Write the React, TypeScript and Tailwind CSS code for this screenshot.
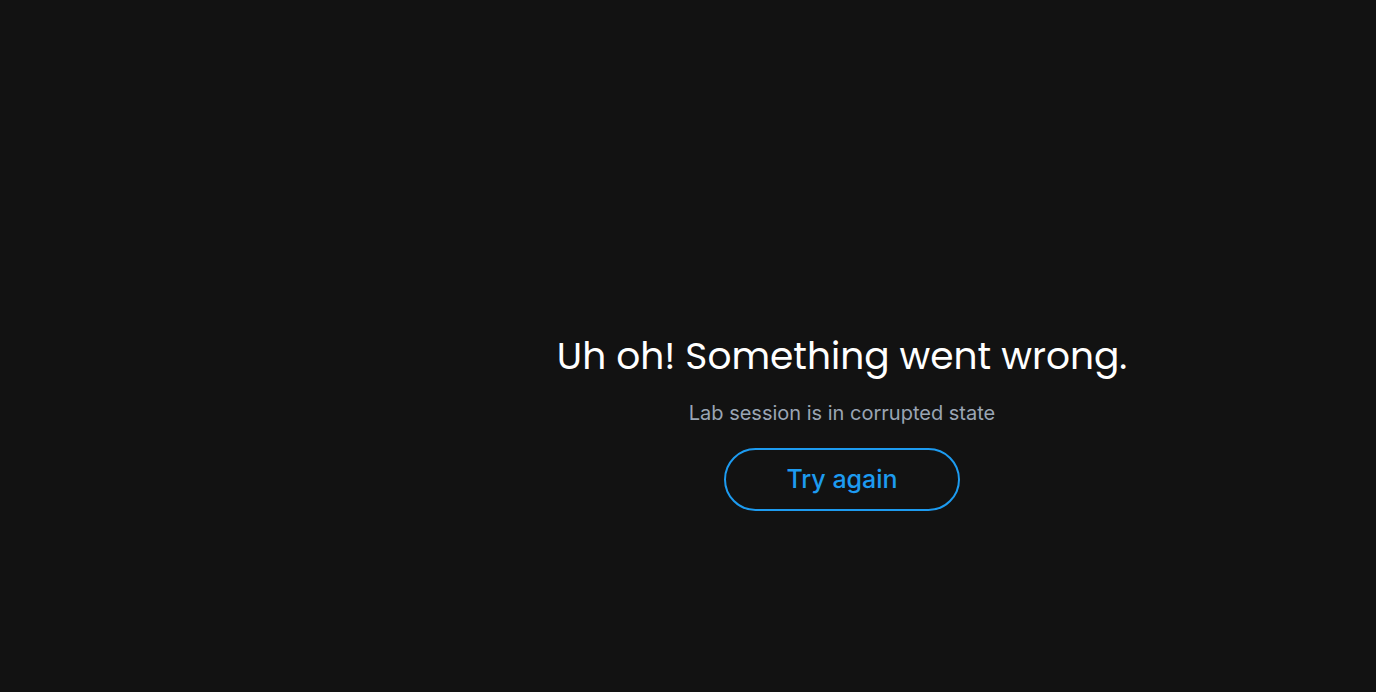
export default function App() {
  return (
    <div className="flex h-[692px] w-full bg-[#121212]">
      <aside className="w-[308px] shrink-0" />
      <main className="flex flex-1 flex-col items-center pt-[334px]">
        <h1 className="text-[37.5px] leading-[44px] font-normal text-white font-['Poppins','Open_Sans',sans-serif]">
          Uh oh! Something went wrong.
        </h1>
        <p className="mt-[21px] text-[20px] leading-[28px] text-[#9aa5b4] font-['Inter',sans-serif]">
          Lab session is in corrupted state
        </p>
        <button className="mt-[21px] h-[63px] w-[236px] rounded-full border-2 border-[#1d9bf0] text-[25px] font-medium text-[#1d9bf0] font-['Inter',sans-serif]">
          Try again
        </button>
      </main>
    </div>
  );
}
